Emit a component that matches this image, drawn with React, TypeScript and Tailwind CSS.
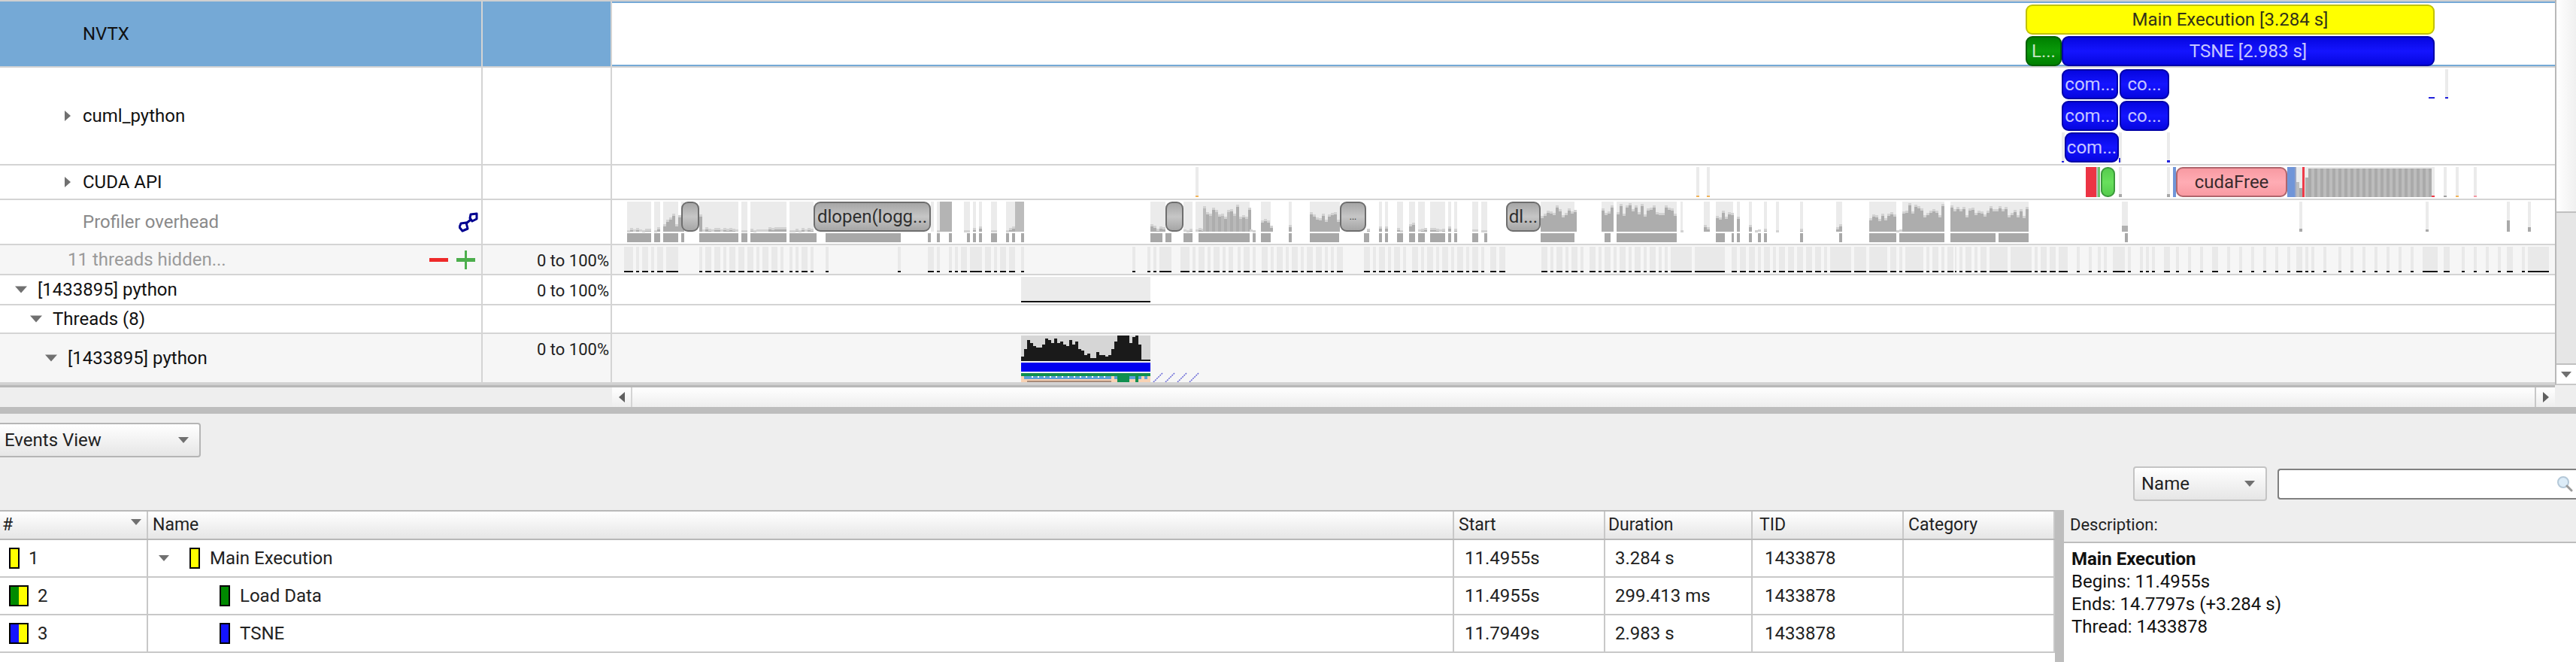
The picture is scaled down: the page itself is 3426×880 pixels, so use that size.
import React from "react";

type Seg = [number, number];
const ROW_X = 814;

const hiddenSegs: Seg[] = [
  [830,842],[846,850],[854,862],[866,870],[874,882],[886,902],[930,934],[938,946],[950,958],[962,966],[970,978],[982,990],[994,1002],[1006,1010],[1014,1022],[1026,1034],[1038,1042],[1050,1054],[1058,1062],[1066,1074],[1078,1082],[1098,1102],[1194,1198],[1234,1242],[1246,1250],[1262,1266],[1270,1274],[1278,1286],[1290,1306],[1310,1318],[1322,1326],[1330,1338],[1342,1350],[1358,1362],[1506,1510],[1526,1530],[1534,1538],[1542,1558],[1570,1582],[1586,1590],[1594,1602],
  [1606,1610],[1614,1622],[1626,1630],[1634,1640],[1646,1650],[1654,1662],[1666,1670],[1678,1686],[1690,1694],[1698,1706],[1710,1714],[1718,1726],[1730,1734],[1738,1746],[1750,1758],[1762,1766],[1770,1774],[1778,1786],
  [1814,1822],[1826,1830],[1834,1842],[1846,1850],[1854,1862],[1866,1870],[1878,1886],[1890,1894],[1898,1906],[1910,1914],[1918,1926],[1930,1934],[1938,1946],[1950,1954],[1958,1966],[1970,1974],[1982,1990],[1994,2002],
  [2050,2058],[2062,2066],[2070,2078],[2082,2086],[2090,2098],[2102,2106],[2114,2122],[2126,2130],[2134,2142],[2146,2150],[2154,2162],[2166,2170],[2174,2182],[2186,2190],[2194,2202],[2206,2210],[2214,2218],[2222,2250],[2254,2294],
  [2303,2310],[2314,2322],[2326,2334],[2338,2342],[2346,2354],[2358,2362],[2366,2374],[2378,2386],[2390,2398],[2402,2410],[2414,2422],[2426,2430],[2434,2462],[2466,2482],[2486,2510],[2514,2522],[2526,2530],[2534,2558],[2562,2566],[2570,2578],[2582,2586],[2590,2598],[2600,2602],
  [2606,2610],[2614,2622],[2626,2630],[2634,2642],[2646,2670],[2674,2702],[2706,2710],[2714,2722],[2726,2734],[2738,2750],[2762,2766],[2778,2782],[2790,2794],[2798,2802],[2810,2826],[2830,2834],[2846,2850],[2854,2858],[2862,2866],[2878,2886],[2894,2898],[2910,2914],[2926,2930],[2942,2950],[2962,2966],[2978,2982],[2994,2998],[3010,3014],[3026,3030],[3042,3046],[3054,3062],[3066,3070],[3074,3078],[3090,3094],[3110,3114],[3126,3130],[3142,3146],[3158,3162],[3174,3178],[3190,3194],[3206,3210],[3222,3242],[3250,3258],[3274,3278],[3290,3294],[3306,3310],[3322,3326],[3334,3342],[3354,3358],[3362,3390],
];

// [x0, x1, peak height]
const profTop: [number, number, number][] = [
  [834,866,6],[870,878,6],[882,906,26],[906,910,39],[930,934,30],[934,982,7],[986,994,3],[998,1046,7],[1050,1082,5],
  [1246,1250,3],[1282,1290,2],[1294,1298,7],[1302,1306,9],[1318,1326,4],[1338,1342,3],[1342,1346,5],[1346,1350,12],
  [1530,1550,13],[1574,1586,4],[1590,1600,8],
  [1600,1662,36],[1662,1670,5],[1677,1690,20],[1714,1718,20],[1742,1782,27],[1818,1820,4],[1834,1838,8],[1842,1846,12],[1858,1866,6],[1874,1882,12],[1886,1895,6],[1902,1922,6],[1926,1930,14],[1934,1938,8],[1958,1966,5],[1970,1978,3],
  [2049,2094,36],[2130,2146,36],[2150,2230,38],[2235,2238,2],[2266,2274,14],[2282,2305,30],[2310,2314,30],[2326,2330,12],[2334,2342,3],[2346,2350,6],[2362,2366,2],[2394,2398,7],[2442,2450,10],
  [2486,2522,28],[2522,2530,6],[2530,2586,38],[2594,2698,36],
];
const profBg: Seg[] = [
  [834,866],[870,878],[882,902],[906,910],[930,982],[986,994],[998,1046],[1050,1082],[1238,1242],[1246,1266],[1282,1290],[1294,1298],[1302,1306],[1318,1326],[1338,1362],[1530,1550],[1574,1586],[1590,1662],[1677,1690],[1714,1718],[1742,1782],[1834,1838],[1842,1846],[1858,1866],[1874,1882],[1886,1895],[1902,1922],[1926,1930],[1934,1938],[1958,1966],[1970,1978],[2049,2094],[2130,2146],[2150,2230],[2235,2238],[2266,2274],[2282,2305],[2310,2314],[2326,2330],[2346,2350],[2362,2366],[2394,2398],[2442,2450],[2486,2522],[2530,2586],[2594,2698],[2822,2830],[3058,3062],[3226,3230],[3334,3338],[3362,3366],
];
const profLow: Seg[] = [
  [834,866],[870,878],[882,902],[906,910],[930,982],[986,994],[998,1046],[1050,1086],[1098,1198],[1234,1238],[1246,1250],[1262,1266],[1286,1290],[1294,1298],[1302,1306],[1318,1326],[1338,1342],[1346,1350],[1358,1362],[1530,1546],[1550,1558],[1574,1586],[1594,1662],[1666,1670],[1677,1690],[1714,1718],[1742,1781],[1814,1821],[1834,1838],[1842,1846],[1858,1866],[1874,1882],[1886,1895],[1902,1922],[1926,1930],[1934,1938],[1958,1966],[1974,1978],[2049,2094],[2134,2142],[2150,2230],[2282,2294],[2303,2306],[2310,2314],[2326,2330],[2338,2342],[2346,2350],[2394,2398],[2446,2450],[2486,2522],[2526,2586],[2594,2654],[2658,2698],[2826,2830],
];
const area: [number, number][] = [6,16,28,24,20,18,18,22,30,28,24,30,24,26,22,20,28,22,26,16,14,8,10,4,4,12,8,8,6,8,16,26,34,34,34,34,24,32,34,22,2,2,2].map((v, i) => [1358 + i * 4, v] as [number, number]);

const rnd = (x: number) => {
  const s = Math.sin(x * 12.9898) * 43758.5453;
  return s - Math.floor(s);
};

function columns(x0: number, x1: number, peak: number) {
  const out: React.ReactNode[] = [];
  const floor = peak >= 27 ? 0.55 : 0.3;
  for (let x = x0; x < x1; x += 4) {
    const h = Math.max(2, Math.round(peak * (floor + (1 - floor) * rnd(x))));
    out.push(<rect key={`t${x}`} x={x} y={308 - h} width={4} height={3} fill="#d2d2d2" />);
    out.push(<rect key={`b${x}`} x={x} y={311 - h} width={4} height={Math.max(h - 3, 0)} fill={x % 8 === 0 ? "#bababa" : "#adadad"} />);
  }
  return out;
}

type V = "yellow" | "blue" | "green" | "pink" | "lime" | "gray";
const variants: Record<V, string> = {
  yellow: "bg-[#ffff00] border-[#c2c200] text-[#33331a]",
  blue: "bg-gradient-to-b from-[#0606e0] via-[#1414ff] to-[#0606e0] border-[#0000a8] text-[#c6c6ff]",
  green: "bg-gradient-to-b from-[#008000] via-[#0a9a0a] to-[#008000] border-[#006000] text-[#c2e6c2]",
  pink: "bg-gradient-to-b from-[#f89aa2] via-[#ffacb4] to-[#f89aa2] border-[#b0656c] text-[#3a2a2c]",
  lime: "bg-gradient-to-b from-[#56cc4e] via-[#68e05c] to-[#56cc4e] border-[#3c9a3c] text-[#222222]",
  gray: "bg-gradient-to-b from-[#a6a6a6] via-[#c6c6c6] to-[#a6a6a6] border-[#6e6e6e] text-[#2e2e2e]",
};

function Block({ x, y, w, h, v, children }: { x: number; y: number; w: number; h: number; v: V; children?: React.ReactNode }) {
  return (
    <div
      className={`absolute flex items-center justify-center overflow-hidden whitespace-nowrap rounded-[9px] border-2 text-[24px] leading-none ${variants[v]}`}
      style={{ left: x - ROW_X, top: y, width: w, height: h }}
    >
      {children}
    </div>
  );
}

function Tri({ dir, className }: { dir: "right" | "down"; className?: string }) {
  return (
    <svg viewBox="0 0 14 14" className={className} aria-hidden="true">
      {dir === "right" ? <polygon points="3,0 11,7 3,14" fill="#707070" /> : <polygon points="0,3 14,3 7,11" fill="#707070" />}
    </svg>
  );
}

function Row({ h, bg = "bg-white", label, labelClass = "text-[#111111]", pad, arrow, range, icons, children, header }: {
  h: number; bg?: string; label: string; labelClass?: string; pad: number; arrow?: "right" | "down"; range?: string; icons?: React.ReactNode; children?: React.ReactNode; header?: boolean;
}) {
  return (
    <div className={`flex shrink-0 border-b-2 border-[#d4d4d4] ${bg}`} style={{ height: h }}>
      <div className="flex w-[642px] shrink-0 items-center border-r-2 border-[#d4d4d4] text-[24px]" style={{ paddingLeft: pad }}>
        {arrow && <Tri dir={arrow} className={arrow === "right" ? "-ml-[27px] mr-[13px] h-[14px] w-[14px]" : "-ml-[30px] mr-[14px] h-[16px] w-[16px]"} />}
        <span className={labelClass}>{label}</span>
        {icons}
      </div>
      <div className="flex w-[172px] shrink-0 items-start justify-end border-r-2 border-[#d4d4d4] pr-[2px] pt-[4px] text-[22px] text-[#222222]">
        {range}
      </div>
      <div className={`relative min-w-0 flex-1 ${header ? "border-y-2 border-[#75a9d6] bg-white" : ""}`}>{children}</div>
    </div>
  );
}

function Rects({ y0, h, children }: { y0: number; h: number; children: React.ReactNode }) {
  return (
    <svg className="absolute left-0 top-0" width={2584} height={h} viewBox={`${ROW_X} ${y0} 2584 ${h}`} aria-hidden="true">
      {children}
    </svg>
  );
}

function Combo({ label, className }: { label: string; className: string }) {
  return (
    <div className={`flex items-center justify-between bg-gradient-to-b from-white to-[#e6e6e6] text-[24px] text-[#222222] ${className}`}>
      <span>{label}</span>
      <Tri dir="down" className="h-[14px] w-[14px]" />
    </div>
  );
}

function Swatch({ colors }: { colors: string[] }) {
  return (
    <span className="flex h-[28px] shrink-0 border-2 border-black">
      {colors.map((c) => (
        <span key={c} className={colors.length > 1 ? "h-full w-[11px]" : "h-full w-[10px]"} style={{ background: c }} />
      ))}
    </span>
  );
}

const cols = ["w-[197px]", "w-[1737px]", "w-[201px]", "w-[196px]", "w-[201px]", "w-[201px]"];
const heads = [
  { t: "#", c: "pl-[3px]" },
  { t: "Name", c: "pl-[6px]" },
  { t: "Start", c: "pl-[6px]" },
  { t: "Duration", c: "pl-[4px]" },
  { t: "TID", c: "pl-[9px]" },
  { t: "Category", c: "pl-[6px]" },
];
const rows = [
  { n: "1", s: ["#ffff00"], name: "Main Execution", c: "#ffff00", indent: 55, arrow: true, start: "11.4955s", dur: "3.284 s", tid: "1433878" },
  { n: "2", s: ["#008a00", "#ffff00"], name: "Load Data", c: "#008a00", indent: 95, arrow: false, start: "11.4955s", dur: "299.413 ms", tid: "1433878" },
  { n: "3", s: ["#1414ff", "#ffff00"], name: "TSNE", c: "#1414ff", indent: 95, arrow: false, start: "11.7949s", dur: "2.983 s", tid: "1433878" },
];

export default function App() {
  return (
    <div className="flex h-[880px] w-[3426px] flex-col overflow-hidden bg-[#eeeeee] font-['Roboto',sans-serif]">
      <div className="flex h-[515px] shrink-0">
        <div className="flex min-w-0 flex-1 flex-col">
          <div className="h-[2px] shrink-0 bg-[#d0d0d0]" />
          <Row h={88} bg="bg-[#75a9d6]" label="NVTX" pad={110} header>
            <Block x={2694} y={2} w={544} h={40} v="yellow">Main Execution [3.284 s]</Block>
            <Block x={2694} y={44} w={48} h={40} v="green">L...</Block>
            <Block x={2742} y={44} w={496} h={40} v="blue">TSNE [2.983 s]</Block>
          </Row>
          <Row h={130} label="cuml_python" pad={110} arrow="right">
            <Rects y0={90} h={128}>
              <rect x={3252} y={92} width={4} height={40} fill="#ebebeb" />
              <rect x={3252} y={129} width={4} height={2} fill="#2222dd" />
              <rect x={3230} y={129} width={8} height={2} fill="#2222dd" />
              <rect x={2742} y={176} width={4} height={40} fill="#ebebeb" />
              <rect x={2742} y={214} width={3} height={2} fill="#2222dd" />
              <rect x={2818} y={176} width={4} height={40} fill="#ebebeb" />
              <rect x={2818} y={210} width={2} height={6} fill="#2222dd" />
              <rect x={2882} y={176} width={4} height={40} fill="#ebebeb" />
              <rect x={2882} y={213} width={4} height={3} fill="#2222dd" />
            </Rects>
            <Block x={2742} y={2} w={75} h={40} v="blue">com...</Block>
            <Block x={2819} y={2} w={66} h={40} v="blue">co...</Block>
            <Block x={2742} y={44} w={75} h={40} v="blue">com...</Block>
            <Block x={2819} y={44} w={66} h={40} v="blue">co...</Block>
            <Block x={2746} y={86} w={72} h={40} v="blue">com...</Block>
          </Row>
          <Row h={46} label="CUDA API" pad={110} arrow="right">
            <Rects y0={220} h={44}>
              {[1590, 2256, 2270, 3250, 3266, 3290].map((x, i) => (
                <g key={x}>
                  <rect x={x} y={222} width={4} height={40} fill="#ebebeb" />
                  <rect x={x} y={260} width={4} height={2} fill={i === 3 ? "#a0a0a0" : i === 5 ? "#f59aa5" : "#f2b45a"} />
                </g>
              ))}
              {[2818, 2882].map((x) => (
                <g key={x}>
                  <rect x={x} y={222} width={4} height={40} fill="#ebebeb" />
                  <rect x={x} y={258} width={4} height={4} fill="#a8a8a8" />
                </g>
              ))}
              <rect x={2774} y={222} width={14} height={40} fill="#ec3444" />
              <rect x={2788} y={222} width={2} height={40} fill="#bdbdbd" />
              <rect x={2790} y={222} width={3} height={40} fill="#6cc46c" />
              <rect x={2890} y={222} width={4} height={40} fill="#7095d8" />
              <rect x={3042} y={222} width={196} height={40} fill="#ebebeb" />
              <rect x={3042} y={222} width={10} height={40} fill="#7095d8" />
              <rect x={3052} y={222} width={2} height={40} fill="#9aa6c4" />
              <rect x={3054} y={242} width={4} height={20} fill="#bdbdbd" />
              <rect x={3058} y={250} width={4} height={12} fill="#a9a9a9" />
              <rect x={3062} y={222} width={3} height={40} fill="#ee3a48" />
              <rect x={3066} y={236} width={4} height={26} fill="#b0b0b0" />
              {Array.from({ length: 41 }, (_, i) => (
                <rect key={i} x={3070 + i * 4} y={224} width={4} height={38} fill={i % 2 ? "#bcbcbc" : "#aaaaaa"} />
              ))}
              <rect x={3230} y={228} width={4} height={34} fill="#adadad" />
              <rect x={3234} y={260} width={4} height={2} fill="#ee3a48" />
            </Rects>
            <Block x={2794} y={2} w={19} h={40} v="lime" />
            <Block x={2894} y={2} w={148} h={40} v="pink">cudaFree</Block>
          </Row>
          <Row h={60} label="Profiler overhead" labelClass="text-[#8a8a8a]" pad={110} icons={
            <svg viewBox="0 0 26 27" className="ml-auto mr-[4px] h-[27px] w-[26px]" aria-hidden="true">
              <path d="M3 15 L10 14 L12 22 L5 25 L1 20 Z" fill="#fff" stroke="#000090" strokeWidth="3" strokeLinejoin="round" />
              <path d="M16 3 L24 2 L24 9 L18 12 L15 8 Z" fill="#fff" stroke="#000090" strokeWidth="3" strokeLinejoin="round" />
              <path d="M10 15 L16 10" stroke="#000090" strokeWidth="3" />
            </svg>
          }>
            <Rects y0={266} h={58}>
              {profBg.map(([a, b]) => <rect key={a} x={a} y={268} width={b - a} height={40} fill="#ebebeb" />)}
              {profTop.map(([a, b, p]) => <g key={a}>{columns(a, b, p)}</g>)}
              <rect x={1250} y={268} width={16} height={40} fill="#b4b4b4" />
              <rect x={1350} y={268} width={12} height={40} fill="#bcbcbc" />
              <rect x={2822} y={300} width={8} height={8} fill="#b0b0b0" />
              {[[3058, 4], [3226, 3], [3334, 15], [3362, 6]].map(([x, t]) => <rect key={x} x={x} y={308 - t} width={4} height={t} fill="#a9a9a9" />)}
              {profLow.map(([a, b]) => <rect key={a} x={a} y={310} width={b - a} height={12} fill="#a8a8a8" />)}
            </Rects>
            <Block x={906} y={2} w={24} h={40} v="gray" />
            <Block x={1082} y={2} w={156} h={40} v="gray">dlopen(logg...</Block>
            <Block x={1550} y={2} w={24} h={40} v="gray" />
            <Block x={1782} y={2} w={35} h={40} v="gray"><span className="text-[12px]">...</span></Block>
            <Block x={2003} y={2} w={46} h={40} v="gray">dl...</Block>
          </Row>
          <Row h={40} bg="bg-[#f6f6f6]" label="11 threads hidden..." labelClass="text-[#9a9a9a]" pad={90} range="0 to 100%" icons={
            <span className="ml-auto mr-[8px] flex items-center gap-[11px]">
              <span className="h-[5px] w-[25px] bg-[#ee2a2a]" />
              <span className="relative h-[25px] w-[25px]">
                <span className="absolute left-0 top-[10px] h-[5px] w-[25px] bg-[#4cae4c]" />
                <span className="absolute left-[11px] top-0 h-[25px] w-[3px] bg-[#4cae4c]" />
              </span>
            </span>
          }>
            <Rects y0={326} h={38}>
              {hiddenSegs.map(([a, b]) => (
                <g key={a}>
                  <rect x={a} y={328} width={b - a} height={32} fill="#e9e9e9" />
                  <rect x={a} y={360} width={b - a} height={2} fill="#141414" />
                </g>
              ))}
            </Rects>
          </Row>
          <Row h={40} label="[1433895] python" pad={50} arrow="down" range="0 to 100%">
            <Rects y0={366} h={38}>
              <rect x={1358} y={368} width={172} height={32} fill="#ebebeb" />
              <rect x={1358} y={400} width={172} height={2} fill="#141414" />
            </Rects>
          </Row>
          <Row h={38} label="Threads (8)" pad={70} arrow="down" />
          <Row h={66} bg="bg-[#f6f6f6]" label="[1433895] python" pad={90} arrow="down" range="0 to 100%">
            <Rects y0={444} h={64}>
              <rect x={1358} y={446} width={172} height={34} fill="#d6d6d6" />
              {area.map(([x, h]) => <rect key={x} x={x} y={480 - h} width={4} height={h} fill="#1a1a1a" />)}
              <rect x={1358} y={482} width={172} height={12} fill="#0000ee" />
              <rect x={1358} y={496} width={172} height={4} fill="#0f8f4f" />
              <rect x={1358} y={500} width={172} height={8} fill="#f8d2b4" />
              <rect x={1362} y={500} width={116} height={4} fill="#5aa0d8" />
              <rect x={1366} y={506} width={112} height={2} fill="#a88a78" />
              {Array.from({ length: 13 }, (_, i) => <rect key={i} x={1372 + i * 8} y={500} width={2} height={2} fill="#ffffff" />)}
              <rect x={1482} y={500} width={4} height={4} fill="#5aa0d8" />
              <rect x={1486} y={496} width={16} height={12} fill="#0f8f4f" />
              <rect x={1502} y={500} width={8} height={4} fill="#5aa0d8" />
              <rect x={1510} y={496} width={4} height={12} fill="#0f8f4f" />
              <rect x={1514} y={500} width={4} height={4} fill="#5aa0d8" />
              <rect x={1522} y={500} width={4} height={4} fill="#5aa0d8" />
              {[1534, 1550, 1566, 1582].map((x) => (
                <line key={x} x1={x} y1={508} x2={x + 12} y2={496} stroke="#6a6ad8" strokeWidth="1.5" strokeDasharray="2 1" />
              ))}
            </Rects>
          </Row>
          <div className="flex-1 border-b-[3px] border-t-2 border-b-[#b8b8b8] border-t-[#d0d0d0]" />
        </div>
        <div className="flex h-[512px] w-[28px] shrink-0 flex-col border-b-2 border-l-2 border-[#b8b8b8] border-b-[#c8c8c8]">
          <div className="h-[283px] shrink-0 border-b-2 border-[#c0c0c0] bg-gradient-to-r from-white to-[#f0f0f0]" />
          <div className="flex-1 bg-[#e6e6e6]" />
          <div className="flex h-[27px] shrink-0 items-center justify-center border-t-2 border-[#c0c0c0] bg-white">
            <Tri dir="down" className="h-[14px] w-[14px]" />
          </div>
        </div>
      </div>

      <div className="flex h-[26px] shrink-0">
        <div className="w-[814px] shrink-0" />
        <div className="flex w-[27px] shrink-0 items-center justify-center border-r-2 border-[#d4d4d4] bg-gradient-to-b from-white to-[#eeeeee]">
          <svg viewBox="0 0 8 14" className="h-[14px] w-[8px]" aria-hidden="true"><polygon points="8,0 0,7 8,14" fill="#606060" /></svg>
        </div>
        <div className="flex-1 bg-gradient-to-b from-white to-[#eeeeee]" />
        <div className="flex w-[27px] shrink-0 items-center justify-center border-l-2 border-[#c8c8c8] bg-gradient-to-b from-white to-[#eeeeee]">
          <svg viewBox="0 0 8 14" className="h-[14px] w-[8px]" aria-hidden="true"><polygon points="0,0 8,7 0,14" fill="#606060" /></svg>
        </div>
        <div className="w-[28px] shrink-0" />
      </div>
      <div className="h-[9px] shrink-0 bg-[#bdbdbd]" />

      <div className="flex min-h-0 flex-1 flex-col pt-[12px]">
        <Combo label="Events View" className="h-[46px] w-[267px] shrink-0 rounded-r-[4px] border-2 border-l-0 border-[#b5b5b5] pl-[6px] pr-[14px]" />
        <div className="mt-[12px] flex h-[46px] shrink-0 items-center justify-end">
          <Combo label="Name" className="h-[46px] w-[178px] rounded-[4px] border-2 border-[#c4c4c4] pl-[9px] pr-[14px]" />
          <div className="ml-[14px] flex h-[41px] w-[397px] items-center justify-end rounded-l-[4px] border-2 border-r-0 border-[#808080] bg-white pr-[4px]">
            <svg viewBox="0 0 22 22" className="h-[22px] w-[22px]" aria-hidden="true">
              <circle cx="9" cy="9" r="7" fill="#dcecf8" stroke="#b4c8d8" strokeWidth="2" />
              <path d="M14 14 L20 20" stroke="#9a9a9a" strokeWidth="3" strokeLinecap="round" />
            </svg>
          </div>
        </div>
        <div className="mt-[12px] flex min-h-0 flex-1">
          <div className="flex w-[2733px] shrink-0 flex-col bg-white">
            <div className="flex h-[40px] shrink-0 border-b-2 border-t-2 border-[#b8b8b8] bg-gradient-to-b from-white to-[#e6e6e6] text-[23px] text-[#222222]">
              {heads.map((h, i) => (
                <div key={h.t} className={`flex items-center justify-between border-r-2 border-[#c8c8c8] ${h.c} ${cols[i]}`}>
                  <span>{h.t}</span>
                  {i === 0 && <Tri dir="down" className="mb-[8px] mr-[7px] h-[14px] w-[14px]" />}
                </div>
              ))}
            </div>
            {rows.map((r) => (
              <div key={r.n} className="flex h-[50px] shrink-0 border-b-2 border-[#c8c8c8] text-[24px] text-[#222222]">
                <div className={`flex items-center gap-[12px] border-r-2 border-[#c8c8c8] pl-[12px] ${cols[0]}`}>
                  <Swatch colors={r.s} />
                  <span>{r.n}</span>
                </div>
                <div className={`flex items-center border-r-2 border-[#c8c8c8] ${cols[1]}`} style={{ paddingLeft: r.indent }}>
                  {r.arrow && <Tri dir="down" className="-ml-[41px] mr-[27px] h-[14px] w-[14px]" />}
                  <Swatch colors={[r.c]} />
                  <span className="ml-[13px]">{r.name}</span>
                </div>
                <div className={`flex items-center border-r-2 border-[#c8c8c8] pl-[14px] ${cols[2]}`}>{r.start}</div>
                <div className={`flex items-center border-r-2 border-[#c8c8c8] pl-[13px] ${cols[3]}`}>{r.dur}</div>
                <div className={`flex items-center border-r-2 border-[#c8c8c8] pl-[16px] ${cols[4]}`}>{r.tid}</div>
                <div className={`border-r-2 border-[#c8c8c8] ${cols[5]}`} />
              </div>
            ))}
          </div>
          <div className="w-[12px] shrink-0 bg-[#bdbdbd]" />
          <div className="flex min-w-0 flex-1 flex-col">
            <div className="flex h-[44px] shrink-0 items-center border-b-2 border-[#bdbdbd] pb-[4px] pl-[8px] text-[22px] text-[#222222]">Description:</div>
            <div className="flex-1 bg-white pl-[10px] pt-[6px] text-[24px] leading-[30px] text-[#111111]">
              <div className="font-bold">Main Execution</div>
              <div>Begins: 11.4955s</div>
              <div>Ends: 14.7797s (+3.284 s)</div>
              <div>Thread: 1433878</div>
            </div>
          </div>
        </div>
      </div>
    </div>
  );
}
